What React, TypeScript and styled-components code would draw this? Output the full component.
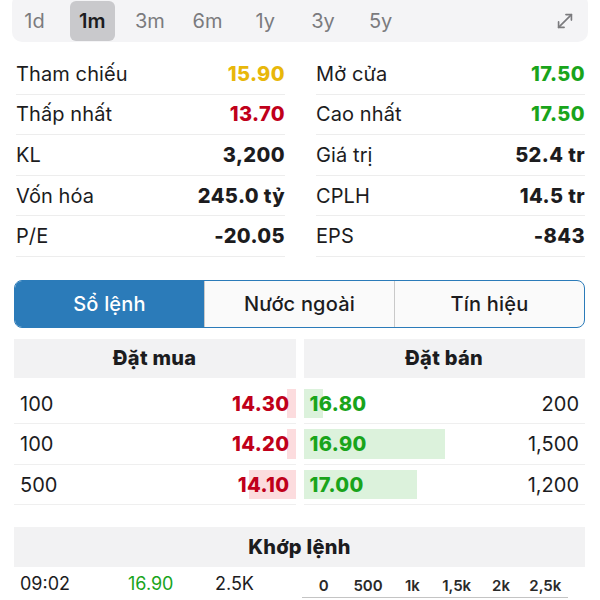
import styled, { createGlobalStyle } from 'styled-components';

const GlobalStyle = createGlobalStyle`
  body {
    margin: 0;
    background: #ffffff;
    font-family: Inter, "Noto Sans", sans-serif;
    color: #1c1c1e;
  }
`;

const colors = {
  yellow: '#e8b70a',
  red: '#c0001a',
  green: '#19a41b',
  text: '#1c1c1e',
  line: '#ededed',
  panel: '#f2f2f3',
  blue: '#2b7bb9',
};

type Tone = 'yellow' | 'red' | 'green' | 'plain';

const toneColor = (tone: Tone) => (tone === 'plain' ? colors.text : colors[tone]);

const periods = ['1d', '1m', '3m', '6m', '1y', '3y', '5y'];

const stats: { label: string; value: string; tone: Tone }[][] = [
  [
    { label: 'Tham chiếu', value: '15.90', tone: 'yellow' },
    { label: 'Thấp nhất', value: '13.70', tone: 'red' },
    { label: 'KL', value: '3,200', tone: 'plain' },
    { label: 'Vốn hóa', value: '245.0 tỷ', tone: 'plain' },
    { label: 'P/E', value: '-20.05', tone: 'plain' },
  ],
  [
    { label: 'Mở cửa', value: '17.50', tone: 'green' },
    { label: 'Cao nhất', value: '17.50', tone: 'green' },
    { label: 'Giá trị', value: '52.4 tr', tone: 'plain' },
    { label: 'CPLH', value: '14.5 tr', tone: 'plain' },
    { label: 'EPS', value: '-843', tone: 'plain' },
  ],
];

const bids = [
  { qty: 100, price: '14.30' },
  { qty: 100, price: '14.20' },
  { qty: 500, price: '14.10' },
];

const asks = [
  { qty: 200, price: '16.80' },
  { qty: 1500, price: '16.90' },
  { qty: 1200, price: '17.00' },
];

const axisTicks = ['0', '500', '1k', '1,5k', '2k', '2,5k'];

const barWidth = (qty: number) => Math.round((qty / 1500) * 141);

const Page = styled.div`
  width: 600px;
  height: 600px;
  overflow: hidden;
  box-sizing: border-box;
  padding: 0 15px 0 14px;
`;

const TabBar = styled.div`
  display: flex;
  align-items: center;
  height: 48px;
  margin: -6px -3px 0 -2px;
  padding-top: 6px;
  box-sizing: border-box;
  background: #f4f4f6;
  border-radius: 10px;
`;

const PeriodTab = styled.div<{ $active?: boolean }>`
  width: 45px;
  height: 40px;
  margin-right: 12.7px;
  display: flex;
  align-items: center;
  justify-content: center;
  border-radius: 6px;
  font-size: 20px;
  font-weight: ${(p) => (p.$active ? 600 : 400)};
  color: ${(p) => (p.$active ? colors.text : '#7b7b7e')};
  background: ${(p) => (p.$active ? '#c9c9cc' : 'transparent')};
`;

const ExpandButton = styled.div`
  margin-left: auto;
  margin-right: 12px;
  display: flex;
  align-items: center;
  color: #7b7b7e;
`;

const StatsGrid = styled.div`
  display: grid;
  grid-template-columns: 1fr 1fr;
  column-gap: 31px;
  margin-top: 12px;
  padding-left: 2px;
`;

const StatColumn = styled.div`
  display: flex;
  flex-direction: column;
`;

const StatRow = styled.div`
  height: 40.6px;
  box-sizing: border-box;
  display: flex;
  align-items: center;
  justify-content: space-between;
  border-bottom: 1px solid ${colors.line};
  font-size: 20px;
  letter-spacing: 0.1px;
`;

const StatValue = styled.span<{ $tone: Tone }>`
  font-weight: 800;
  letter-spacing: 0.4px;
  color: ${(p) => toneColor(p.$tone)};
`;

const Segmented = styled.div`
  display: flex;
  margin-top: 23px;
  height: 48px;
  box-sizing: border-box;
  border: 1.5px solid ${colors.blue};
  border-radius: 8px;
  overflow: hidden;
  background: #fafafa;
`;

const Segment = styled.div<{ $active?: boolean }>`
  flex: 1;
  display: flex;
  align-items: center;
  justify-content: center;
  font-size: 20px;
  font-weight: 500;
  letter-spacing: 0.2px;
  color: ${(p) => (p.$active ? '#ffffff' : colors.text)};
  background: ${(p) => (p.$active ? colors.blue : 'transparent')};
  & + & {
    border-left: 1px solid #c9c9c9;
  }
`;

const Book = styled.div`
  display: grid;
  grid-template-columns: 1fr 1fr;
  column-gap: 8px;
  margin-top: 11px;
`;

const PanelHeader = styled.div`
  height: 39px;
  display: flex;
  align-items: center;
  justify-content: center;
  background: ${colors.panel};
  font-size: 20px;
  font-weight: 800;
  letter-spacing: 0.3px;
`;

const BookRows = styled.div`
  margin-top: 6px;
`;

const OrderRow = styled.div`
  position: relative;
  height: 40.5px;
  box-sizing: border-box;
  padding: 0 6px;
  display: flex;
  align-items: center;
  justify-content: space-between;
  border-bottom: 1px solid #efefef;
  font-size: 20px;
`;

const DepthBar = styled.div<{ $side: 'bid' | 'ask' }>`
  position: absolute;
  top: 5px;
  bottom: 5px;
  ${(p) => (p.$side === 'bid' ? 'right: 0;' : 'left: 0;')}
  background: ${(p) => (p.$side === 'bid' ? '#fcdcde' : '#dcf2dc')};
`;

const OrderText = styled.span<{ $tone?: Tone }>`
  position: relative;
  font-weight: ${(p) => (p.$tone ? 800 : 400)};
  letter-spacing: ${(p) => (p.$tone ? '0.4px' : '0')};
  color: ${(p) => toneColor(p.$tone ?? 'plain')};
`;

const MatchHeader = styled(PanelHeader)`
  margin-top: 22px;
  height: 40px;
`;

const Bottom = styled.div`
  display: grid;
  grid-template-columns: 1fr 1fr;
  column-gap: 8px;
`;

const TradeRow = styled.div`
  display: flex;
  align-items: center;
  height: 32px;
  padding-left: 6px;
  font-size: 18px;
`;

const TradeCell = styled.span<{ $width?: number; $tone?: Tone }>`
  width: ${(p) => (p.$width ? `${p.$width}px` : 'auto')};
  color: ${(p) => toneColor(p.$tone ?? 'plain')};
`;

const Axis = styled.div`
  display: flex;
  margin-left: -2px;
  height: 31px;
  align-items: center;
  padding-top: 6px;
  box-sizing: border-box;
  border-bottom: 1.5px solid #c4c4c4;
  width: 266px;
`;

const AxisLabel = styled.span`
  width: 44.4px;
  text-align: center;
  font-size: 15px;
  font-weight: 600;
  color: #2a2a2a;
`;

const ExpandIcon = () => (
  <svg width="22" height="22" viewBox="0 0 24 24" fill="none" stroke="currentColor" strokeWidth="1.8" strokeLinecap="round" strokeLinejoin="round">
    <polyline points="13 5 19 5 19 11" />
    <polyline points="11 19 5 19 5 13" />
    <line x1="19" y1="5" x2="5" y2="19" />
  </svg>
);

export default function App() {
  return (
    <Page>
      <GlobalStyle />
      <TabBar>
        {periods.map((p) => (
          <PeriodTab key={p} $active={p === '1m'}>
            {p}
          </PeriodTab>
        ))}
        <ExpandButton>
          <ExpandIcon />
        </ExpandButton>
      </TabBar>

      <StatsGrid>
        {stats.map((col, i) => (
          <StatColumn key={i}>
            {col.map((s) => (
              <StatRow key={s.label}>
                <span>{s.label}</span>
                <StatValue $tone={s.tone}>{s.value}</StatValue>
              </StatRow>
            ))}
          </StatColumn>
        ))}
      </StatsGrid>

      <Segmented>
        <Segment $active>Sổ lệnh</Segment>
        <Segment>Nước ngoài</Segment>
        <Segment>Tín hiệu</Segment>
      </Segmented>

      <Book>
        <div>
          <PanelHeader>Đặt mua</PanelHeader>
          <BookRows>
            {bids.map((b, i) => (
              <OrderRow key={i}>
                <DepthBar $side="bid" style={{ width: barWidth(b.qty) }} />
                <OrderText>{b.qty.toLocaleString('en-US')}</OrderText>
                <OrderText $tone="red">{b.price}</OrderText>
              </OrderRow>
            ))}
          </BookRows>
        </div>
        <div>
          <PanelHeader>Đặt bán</PanelHeader>
          <BookRows>
            {asks.map((a, i) => (
              <OrderRow key={i}>
                <DepthBar $side="ask" style={{ width: barWidth(a.qty) }} />
                <OrderText $tone="green">{a.price}</OrderText>
                <OrderText>{a.qty.toLocaleString('en-US')}</OrderText>
              </OrderRow>
            ))}
          </BookRows>
        </div>
      </Book>

      <MatchHeader>Khớp lệnh</MatchHeader>
      <Bottom>
        <TradeRow>
          <TradeCell $width={108}>09:02</TradeCell>
          <TradeCell $width={87} $tone="green">16.90</TradeCell>
          <TradeCell>2.5K</TradeCell>
        </TradeRow>
        <Axis>
          {axisTicks.map((t) => (
            <AxisLabel key={t}>{t}</AxisLabel>
          ))}
        </Axis>
      </Bottom>
    </Page>
  );
}
